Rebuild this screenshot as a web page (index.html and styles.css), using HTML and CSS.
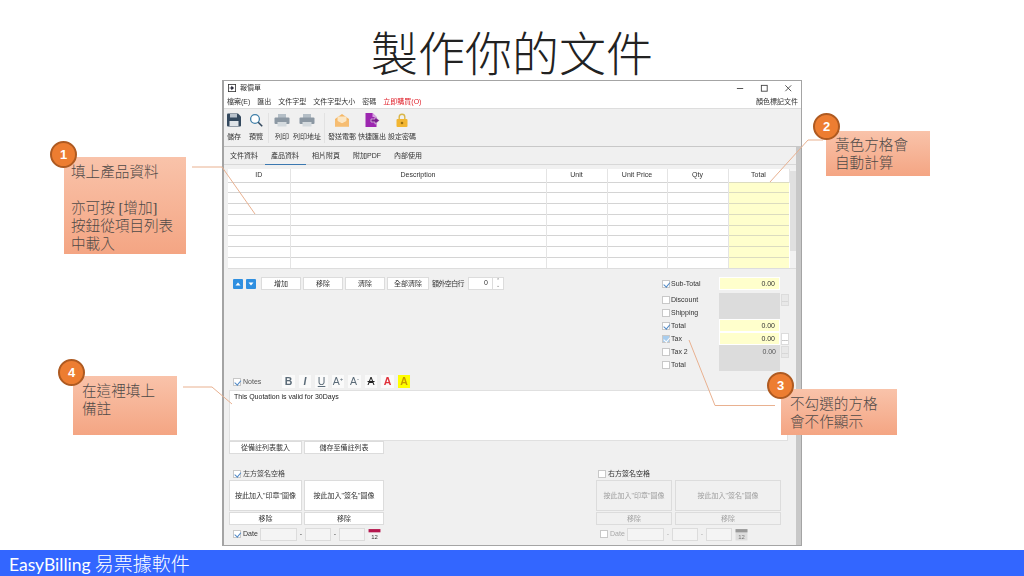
FILE: index.html
```html
<!DOCTYPE html>
<html lang="zh-Hant">
<head>
  <meta charset="UTF-8">
  <title>EasyBilling</title>
  <link rel="stylesheet" href="styles.css">
</head>
<body>
  <h1 class="slide-title">製作你的文件</h1>

  <div class="window">
    <div class="titlebar">
      <svg class="app-icon" viewBox="0 0 10 10"><rect x="0.5" y="0.5" width="9" height="9" fill="#fff" stroke="#333"/><path d="M2 5h4M4.5 3l2.5 2-2.5 2z" stroke="#223" fill="#223"/></svg>
      <span class="win-title">報價單</span>
      <div class="win-controls">
        <svg viewBox="0 0 10 10"><path d="M1 5h7" stroke="#444"/></svg>
        <svg viewBox="0 0 10 10"><rect x="1.5" y="1.5" width="6.5" height="6.5" fill="none" stroke="#444"/></svg>
        <svg viewBox="0 0 10 10"><path d="M1.5 1.5l6.5 6.5M8 1.5l-6.5 6.5" stroke="#444"/></svg>
      </div>
    </div>

    <div class="menubar">
      <span>檔案(E)</span><span>匯出</span><span>文件字型</span><span>文件字型大小</span><span>密碼</span><span class="buy">立即購買(O)</span>
      <span class="menu-right">顏色標記文件</span>
    </div>

    <div class="toolbar">
      <div class="tool">
        <svg viewBox="0 0 14 14"><path d="M0 1.5q0-1 1-1h10l3 3v9q0 1-1 1H1q-1 0-1-1z" fill="#34495e"/><rect x="3" y="1" width="7" height="3.5" fill="#b8c2cc"/><rect x="2.5" y="8" width="9" height="5" fill="#dfe4e8"/></svg>
        <span>儲存</span>
      </div>
      <div class="tool tool-gap">
        <svg viewBox="0 0 14 14"><circle cx="6" cy="6" r="4.4" fill="#fff" stroke="#3f7fa8" stroke-width="1.3"/><path d="M9.2 9.2l4 4" stroke="#34495e" stroke-width="1.6"/></svg>
        <span>預覽</span>
      </div>
      <div class="tool-sep"></div>
      <div class="tool">
        <svg class="wide" viewBox="0 0 16 14"><rect x="4" y="1" width="8" height="4" fill="#b4bec6"/><rect x="0.5" y="4.5" width="15" height="6.5" rx="1" fill="#8c98a3"/><rect x="3.5" y="9" width="9" height="4.5" fill="#d4dade"/></svg>
        <span>列印</span>
      </div>
      <div class="tool tool-mid">
        <svg class="wide" viewBox="0 0 16 14"><rect x="4" y="1" width="8" height="4" fill="#b4bec6"/><rect x="0.5" y="4.5" width="15" height="6.5" rx="1" fill="#8c98a3"/><rect x="3.5" y="9" width="9" height="4.5" fill="#d4dade"/></svg>
        <span>列印地址</span>
      </div>
      <div class="tool-sep tight"></div>
      <div class="tool">
        <svg class="wide" viewBox="0 0 16 14"><path d="M1 6l7-5 7 5v7.5H1z" fill="#f4b766"/><path d="M3.5 3.5h9v5L8 10.5l-4.5-2z" fill="#fbe6c4"/><path d="M1 6.5l7 4 7-4v7H1z" fill="#f6bd72"/></svg>
        <span>發送電郵</span>
      </div>
      <div class="tool tool-near">
        <svg class="wide" viewBox="0 0 16 14"><path d="M1.5 0h7l4 4v10h-11z" fill="#9c27b0"/><path d="M8.500 0l4 4h-4z" fill="#d9a3e3"/><path d="M7 6h4V3.800L15.500 7.500 11 11.200V9H7z" fill="#7b1f8f" stroke="#f0f0f0" stroke-width=".6"/></svg>
        <span>快捷匯出</span>
      </div>
      <div class="tool tool-near">
        <svg viewBox="0 0 14 14"><path d="M4.200 6V4a2.800 2.800 0 0 1 5.600 0v2" fill="none" stroke="#d9b64a" stroke-width="1.4"/><rect x="1.5" y="6" width="11" height="8" rx="1" fill="#f2b632"/><circle cx="7" cy="10" r="1.3" fill="#9a6f10"/></svg>
        <span>設定密碼</span>
      </div>
    </div>

    <div class="content">
      <div class="main">
        <div class="tabs">
          <span>文件資料</span><span class="active">產品資料</span><span>相片附頁</span><span>附加PDF</span><span>內部使用</span>
        </div>

        <div class="table-wrap">
          <table class="items">
            <thead>
              <tr><th class="c-id">ID</th><th class="c-desc">Description</th><th class="c-unit">Unit</th><th class="c-price">Unit Price</th><th class="c-qty">Qty</th><th class="c-total">Total</th></tr>
            </thead>
            <tbody>
              <tr><td></td><td></td><td></td><td></td><td></td><td class="auto"></td></tr>
              <tr><td></td><td></td><td></td><td></td><td></td><td class="auto"></td></tr>
              <tr><td></td><td></td><td></td><td></td><td></td><td class="auto"></td></tr>
              <tr><td></td><td></td><td></td><td></td><td></td><td class="auto"></td></tr>
              <tr><td></td><td></td><td></td><td></td><td></td><td class="auto"></td></tr>
              <tr><td></td><td></td><td></td><td></td><td></td><td class="auto"></td></tr>
              <tr><td></td><td></td><td></td><td></td><td></td><td class="auto"></td></tr>
              <tr><td></td><td></td><td></td><td></td><td></td><td class="auto"></td></tr>
            </tbody>
          </table>
          <div class="table-scroll"><div class="thumb"></div></div>
        </div>

        <div class="mid">
          <div class="row-actions">
            <span class="arrow-btn"><svg viewBox="0 0 10 10"><rect width="10" height="10" rx="1" fill="#2f8fe0"/><path d="M2.5 6.5L5 3.5l2.5 3z" fill="#fff"/></svg></span>
            <span class="arrow-btn"><svg viewBox="0 0 10 10"><rect width="10" height="10" rx="1" fill="#2f8fe0"/><path d="M2.5 3.5L5 6.5l2.5-3z" fill="#fff"/></svg></span>
            <button class="btn btn-add">增加</button>
            <button class="btn btn-add">移除</button>
            <button class="btn btn-add">清除</button>
            <button class="btn btn-all">全部清除</button>
            <span class="extra-label">額外空白行</span>
            <span class="spin"><span class="spin-val">0</span><span class="spin-arrows">⌃<br>⌄</span></span>
          </div>

          <div class="totals">
            <div class="t-row"><span class="check on"></span><label>Sub-Total</label><span class="t-field yellow">0.00</span></div>
            <div class="t-row t-second"><span class="check"></span><label>Discount</label><span class="t-field off"></span><span class="dots dim">...</span></div>
            <div class="t-row"><span class="check"></span><label>Shipping</label><span class="t-field off"></span></div>
            <div class="t-row"><span class="check on"></span><label>Total</label><span class="t-field yellow">0.00</span></div>
            <div class="t-row"><span class="check on blue"></span><label>Tax</label><span class="t-field yellow">0.00</span><span class="dots">...</span></div>
            <div class="t-row"><span class="check"></span><label>Tax 2</label><span class="t-field off">0.00</span><span class="dots dim">...</span></div>
            <div class="t-row"><span class="check"></span><label>Total</label><span class="t-field off"></span></div>
          </div>
        </div>

        <div class="notes-bar">
          <span class="check on"></span><label class="notes-label">Notes</label>
          <div class="fmt">
            <span class="fmt-btn bold">B</span>
            <span class="fmt-btn ital">I</span>
            <span class="fmt-btn under">U</span>
            <span class="fmt-btn">A<sup>+</sup></span>
            <span class="fmt-btn">A<sup>-</sup></span>
            <span class="fmt-btn strike">A</span>
            <span class="fmt-btn red">A</span>
            <span class="fmt-btn hl">A</span>
          </div>
        </div>
        <div class="notes-box">This Quotation is valid for 30Days</div>
        <div class="notes-actions">
          <button class="btn">從備註列表載入</button>
          <button class="btn">儲存至備註列表</button>
        </div>

        <div class="signs">
          <div class="sign">
            <div class="sign-head"><span class="check on"></span><span>左方簽名空格</span></div>
            <div class="sign-grid">
              <button class="btn tall">按此加入"印章"圖像</button>
              <button class="btn tall">按此加入"簽名"圖像</button>
              <button class="btn">移除</button>
              <button class="btn">移除</button>
            </div>
            <div class="date-row">
              <span class="check on"></span><label>Date</label>
              <span class="d-box d-y"></span><i>-</i><span class="d-box"></span><i>-</i><span class="d-box"></span>
              <span class="cal"><svg viewBox="0 0 12 12"><rect x="0.5" y="1" width="11" height="10.5" fill="#f3f3f3"/><rect x="0.5" y="1" width="11" height="3" fill="#b5174e"/><text x="6" y="10" font-size="5.5" text-anchor="middle" fill="#333">12</text></svg></span>
            </div>
          </div>

          <div class="sign sign-off">
            <div class="sign-head"><span class="check"></span><span class="strong">右方簽名空格</span></div>
            <div class="sign-grid">
              <button class="btn tall">按此加入"印章"圖像</button>
              <button class="btn tall">按此加入"簽名"圖像</button>
              <button class="btn">移除</button>
              <button class="btn">移除</button>
            </div>
            <div class="date-row">
              <span class="check"></span><label>Date</label>
              <span class="d-box d-y"></span><i>-</i><span class="d-box"></span><i>-</i><span class="d-box"></span>
              <span class="cal"><svg viewBox="0 0 12 12"><rect x="0.5" y="1" width="11" height="10.5" fill="#ddd"/><rect x="0.5" y="1" width="11" height="3" fill="#999"/><text x="6" y="10" font-size="5.5" text-anchor="middle" fill="#777">12</text></svg></span>
            </div>
          </div>
        </div>
      </div>
      <div class="outer-scroll"></div>
    </div>
  </div>

  <footer class="footer"><span class="brand">EasyBilling</span> 易票據軟件</footer>

  <!-- callout leader lines -->
  <svg class="leaders" viewBox="0 0 1024 576">
    <path d="M192 167H222L255 214"/>
    <path d="M823 140H808L770 182"/>
    <path d="M689 340L715 405.5H775"/>
    <path d="M183 387H212L232 404"/>
  </svg>

  <div class="callout c1"><span class="num">1</span>填上產品資料<br><br>亦可按 [增加]<br>按鈕從項目列表<br>中載入</div>
  <div class="callout c2"><span class="num">2</span>黃色方格會<br>自動計算</div>
  <div class="callout c3"><span class="num">3</span>不勾選的方格<br>會不作顯示</div>
  <div class="callout c4"><span class="num">4</span>在這裡填上<br>備註</div>
</body>
</html>
```

FILE: styles.css
```css
* {
  box-sizing: border-box;
  margin: 0;
  padding: 0;
}

body {
  position: relative;
  width: 1024px;
  height: 576px;
  overflow: hidden;
  background: #fff;
  font-family: "Liberation Sans", "Noto Sans CJK TC", sans-serif;
  color: #333;
}

.slide-title {
  height: 80px;
  padding-top: 19px;
  text-align: center;
  font-family: "Noto Sans CJK TC", sans-serif;
  font-size: 47px;
  line-height: 64px;
  font-weight: 300;
  color: #222;
}

/* app window */
.window {
  width: 580px;
  height: 466px;
  margin-left: 222px;
  display: flex;
  flex-direction: column;
  overflow: hidden;
  background: #fff;
  border: 1px solid #a4a4a4;
  border-left-width: 2px;
  font-size: 7px;
  line-height: 10px;
  filter: blur(0.3px);
}

.titlebar {
  height: 14px;
  flex: none;
  display: flex;
  align-items: center;
  padding-left: 4px;
}

.app-icon {
  width: 8px;
  height: 8px;
  margin-right: 4px;
}

.win-controls {
  margin-left: auto;
  display: flex;
  gap: 15px;
  padding-right: 8px;
}

.win-controls svg {
  width: 9px;
  height: 9px;
}

.menubar {
  height: 14px;
  flex: none;
  display: flex;
  gap: 7px;
  align-items: center;
  padding: 0 3px;
  border-bottom: 1px solid #ddd;
}

.buy {
  color: #e0202a;
}

.menu-right {
  margin-left: auto;
}

.toolbar {
  height: 38px;
  flex: none;
  display: flex;
  padding: 4px 0 0 3px;
  background: #f0f0f0;
  border-bottom: 1px solid #c8c8c8;
}

.tool {
  display: flex;
  flex-direction: column;
  align-items: center;
  gap: 5px;
}

.tool svg {
  width: 14px;
  height: 14px;
}

.tool svg.wide {
  width: 16px;
}

.tool-gap {
  margin-left: 8px;
}

.tool-mid {
  margin-left: 3px;
}

.tool-near {
  margin-left: 2px;
}

.tool-sep {
  width: 1px;
  height: 30px;
  margin: 0 5px;
  background: #e2e2e2;
}

.tool-sep.tight {
  margin: 0 3px;
}

.content {
  flex: 1;
  min-height: 0;
  display: flex;
  background: #f0f0f0;
}

.main {
  flex: 1;
  min-width: 0;
  padding-left: 5px;
}

.outer-scroll {
  width: 5px;
  background: #c8c8c8;
}

.tabs {
  height: 18px;
  display: flex;
  align-items: center;
  margin-left: -5px;
  padding-left: 6px;
  gap: 13px;
  border-bottom: 1px solid #d8d8d8;
}

.tabs .active {
  position: relative;
}

.tabs .active::after {
  content: "";
  position: absolute;
  left: -6px;
  right: -7px;
  bottom: -4px;
  height: 1px;
  background: #3b78b0;
}

/* product table */
.table-wrap {
  display: flex;
  margin: 4px 0 0 -1px;
  height: 100px;
  border-bottom: 1px solid #ddd;
}

.items {
  width: 561px;
  border-collapse: collapse;
  table-layout: fixed;
  background: #fff;
}

.items th {
  height: 13px;
  font-weight: 400;
  font-size: 7px;
  border-right: 1px solid #e4e4e4;
}

.items td {
  height: 10.8px;
  border-top: 1px solid #d4d4d4;
  border-right: 1px solid #e4e4e4;
}

.c-id { width: 62px; }
.c-desc { width: 256px; }
.c-unit { width: 61px; }
.c-price { width: 60px; }
.c-qty { width: 61px; }
.c-total { width: 61px; }

.items td.auto {
  background: #ffffcc;
  border-top-color: #dcdcc0;
  border-right: 0;
}

.table-scroll {
  width: 6px;
  background: #f2f2f2;
}

.thumb {
  height: 80px;
  margin-top: 2px;
  background: #e0e0e0;
}

.mid {
  height: 104px;
  display: flex;
  padding-top: 8px;
}

.row-actions {
  width: 433px;
  height: 13px;
  display: flex;
  align-items: center;
  padding-left: 4px;
}

.arrow-btn {
  width: 10px;
  height: 10px;
  margin-right: 3px;
  display: flex;
}

.btn {
  height: 13px;
  background: #fff;
  border: 1px solid #dcdcdc;
  font-family: inherit;
  font-size: 7px;
  line-height: 10px;
  color: #333;
}

.btn-add {
  width: 40px;
  margin: 0 2px 0 0;
}

.row-actions .btn-add:first-of-type {
  margin-left: 2px;
}

.btn-all {
  width: 42px;
}

.extra-label {
  margin: 0 4px 0 3px;
  letter-spacing: -0.6px;
}

.spin {
  width: 36px;
  height: 13px;
  display: flex;
  background: #fff;
  border: 1px solid #dcdcdc;
}

.spin-val {
  flex: 1;
  text-align: right;
  padding-right: 4px;
}

.spin-arrows {
  width: 11px;
  border-left: 1px solid #dcdcdc;
  text-align: center;
  font-size: 5px;
  line-height: 5px;
  color: #777;
}

.totals {
  display: flex;
  flex-direction: column;
}

.t-row {
  height: 13px;
  display: flex;
  align-items: center;
}

.t-second {
  margin-top: 3px;
}

.t-row label {
  width: 48px;
  margin-left: 1px;
}

.check {
  width: 8px;
  height: 8px;
  flex: none;
  position: relative;
  background: #fff;
  border: 1px solid #c8c8c8;
}

.check.on::after {
  content: "";
  position: absolute;
  left: 1.5px;
  top: 0;
  width: 2.5px;
  height: 4.5px;
  border: solid #4f88c6;
  border-width: 0 1px 1px 0;
  transform: rotate(40deg);
}

.check.blue {
  background: #a8cdee;
}

.check.blue::after {
  border-color: #fff;
}

.t-field {
  width: 61px;
  height: 13px;
  text-align: right;
  padding-right: 4px;
  line-height: 13px;
}

.yellow {
  background: #ffffcc;
  border: 1px solid #fff;
  line-height: 11px;
}

.off {
  background: #dcdcdc;
  color: #555;
}

.dots {
  width: 8px;
  height: 12px;
  margin-left: 1px;
  background: #fff;
  border: 1px solid #dcdcdc;
  text-align: center;
}

.dots.dim {
  background: #e8e8e8;
  color: #aaa;
}

/* notes */
.notes-bar {
  height: 17px;
  display: flex;
  align-items: center;
  padding-left: 4px;
}

.notes-label {
  margin-left: 2px;
  color: #555;
}

.fmt {
  display: flex;
  gap: 4px;
  margin-left: 21px;
}

.fmt-btn {
  width: 12.5px;
  height: 13px;
  background: #fafafa;
  font-size: 10.5px;
  line-height: 13px;
  text-align: center;
  color: #5b6b78;
}

.fmt-btn sup {
  font-size: 6px;
  line-height: 0;
}

.bold { font-weight: 700; }
.ital { font-style: italic; font-weight: 700; }
.under { text-decoration: underline; }
.strike { text-decoration: line-through; color: #222; }
.red { color: #e0303a; font-weight: 700; }
.hl { background: #ffff00; color: #c79a00; font-weight: 700; }

.notes-box {
  height: 51px;
  width: 559px;
  padding: 1px 4px;
  background: #fff;
  border: 1px solid #e0e0e0;
  color: #222;
}

.notes-actions {
  display: grid;
  grid-template-columns: 73px 80px;
  column-gap: 2px;
  margin-bottom: 14px;
}

/* signature blocks */
.signs {
  display: flex;
  justify-content: space-between;
  width: 552px;
}

.sign-head {
  height: 11px;
  display: flex;
  align-items: center;
  gap: 2px;
  padding-left: 4px;
  margin-bottom: 1px;
  color: #444;
}

.strong {
  color: #333;
}

.sign-grid {
  display: grid;
  grid-template-columns: 73px 80px;
  column-gap: 2px;
  row-gap: 1px;
}

.tall {
  height: 31px;
}

.date-row {
  height: 16px;
  display: flex;
  align-items: center;
  padding-left: 4px;
  padding-top: 2px;
}

.date-row label {
  margin-left: 2px;
  width: 17px;
}

.date-row i {
  width: 8px;
  text-align: center;
  font-style: normal;
}

.d-box {
  width: 26px;
  height: 13px;
  background: #f4f4f4;
  border: 1px solid #dcdcdc;
}

.d-y {
  width: 37px;
}

.cal {
  width: 13px;
  height: 13px;
  margin-left: 3px;
}

.sign-off .sign-head {
  padding-left: 2px;
}

.sign-off .sign-grid {
  grid-template-columns: 76px 106px;
  column-gap: 3px;
}

.sign-off .btn {
  background: #f0f0f0;
  color: #a0a0a0;
}

.sign-off .date-row {
  color: #a8a8a8;
}

/* bottom band */
.footer {
  position: absolute;
  left: 0;
  right: 0;
  bottom: 0;
  height: 26px;
  padding-left: 9px;
  background: #3366ff;
  color: #fff;
  font-family: "Noto Sans CJK TC", sans-serif;
  font-size: 19px;
  line-height: 26px;
  font-weight: 300;
}

.brand {
  font-family: Lato, sans-serif;
  font-size: 17.5px;
  font-weight: 400;
}

/* callouts */
.leaders {
  position: absolute;
  left: 0;
  top: 0;
  width: 1024px;
  height: 576px;
  fill: none;
  stroke: #e9b190;
  stroke-width: 1;
}

.callout {
  position: absolute;
  padding: 6px 7px;
  background: linear-gradient(#f9c3aa, #f4a583);
  font-family: "Liberation Serif", "Noto Sans CJK TC", serif;
  font-size: 14.6px;
  line-height: 18px;
  font-weight: 300;
  color: #4f4a48;
}

.c1 { left: 64px; top: 157px; width: 122px; height: 97px; }
.c2 { left: 826px; top: 131px; width: 104px; height: 45px; padding: 5px 9px; }
.c3 { left: 781px; top: 389px; width: 116px; height: 46px; padding: 6px 9px; }
.c4 { left: 73px; top: 376px; width: 104px; height: 59px; padding: 6px 9px; }

.num {
  position: absolute;
  left: -14px;
  top: -16px;
  width: 27px;
  height: 27px;
  background: #ed7d31;
  border: 2px solid #ae5a21;
  border-radius: 50%;
  font-family: "Liberation Sans", sans-serif;
  font-size: 13px;
  line-height: 23px;
  font-weight: 700;
  text-align: center;
  color: #fff;
}

.c2 .num { left: -13px; top: -18px; }
.c3 .num { left: -14px; top: -17px; }
.c4 .num { left: -15px; top: -17px; }
```
